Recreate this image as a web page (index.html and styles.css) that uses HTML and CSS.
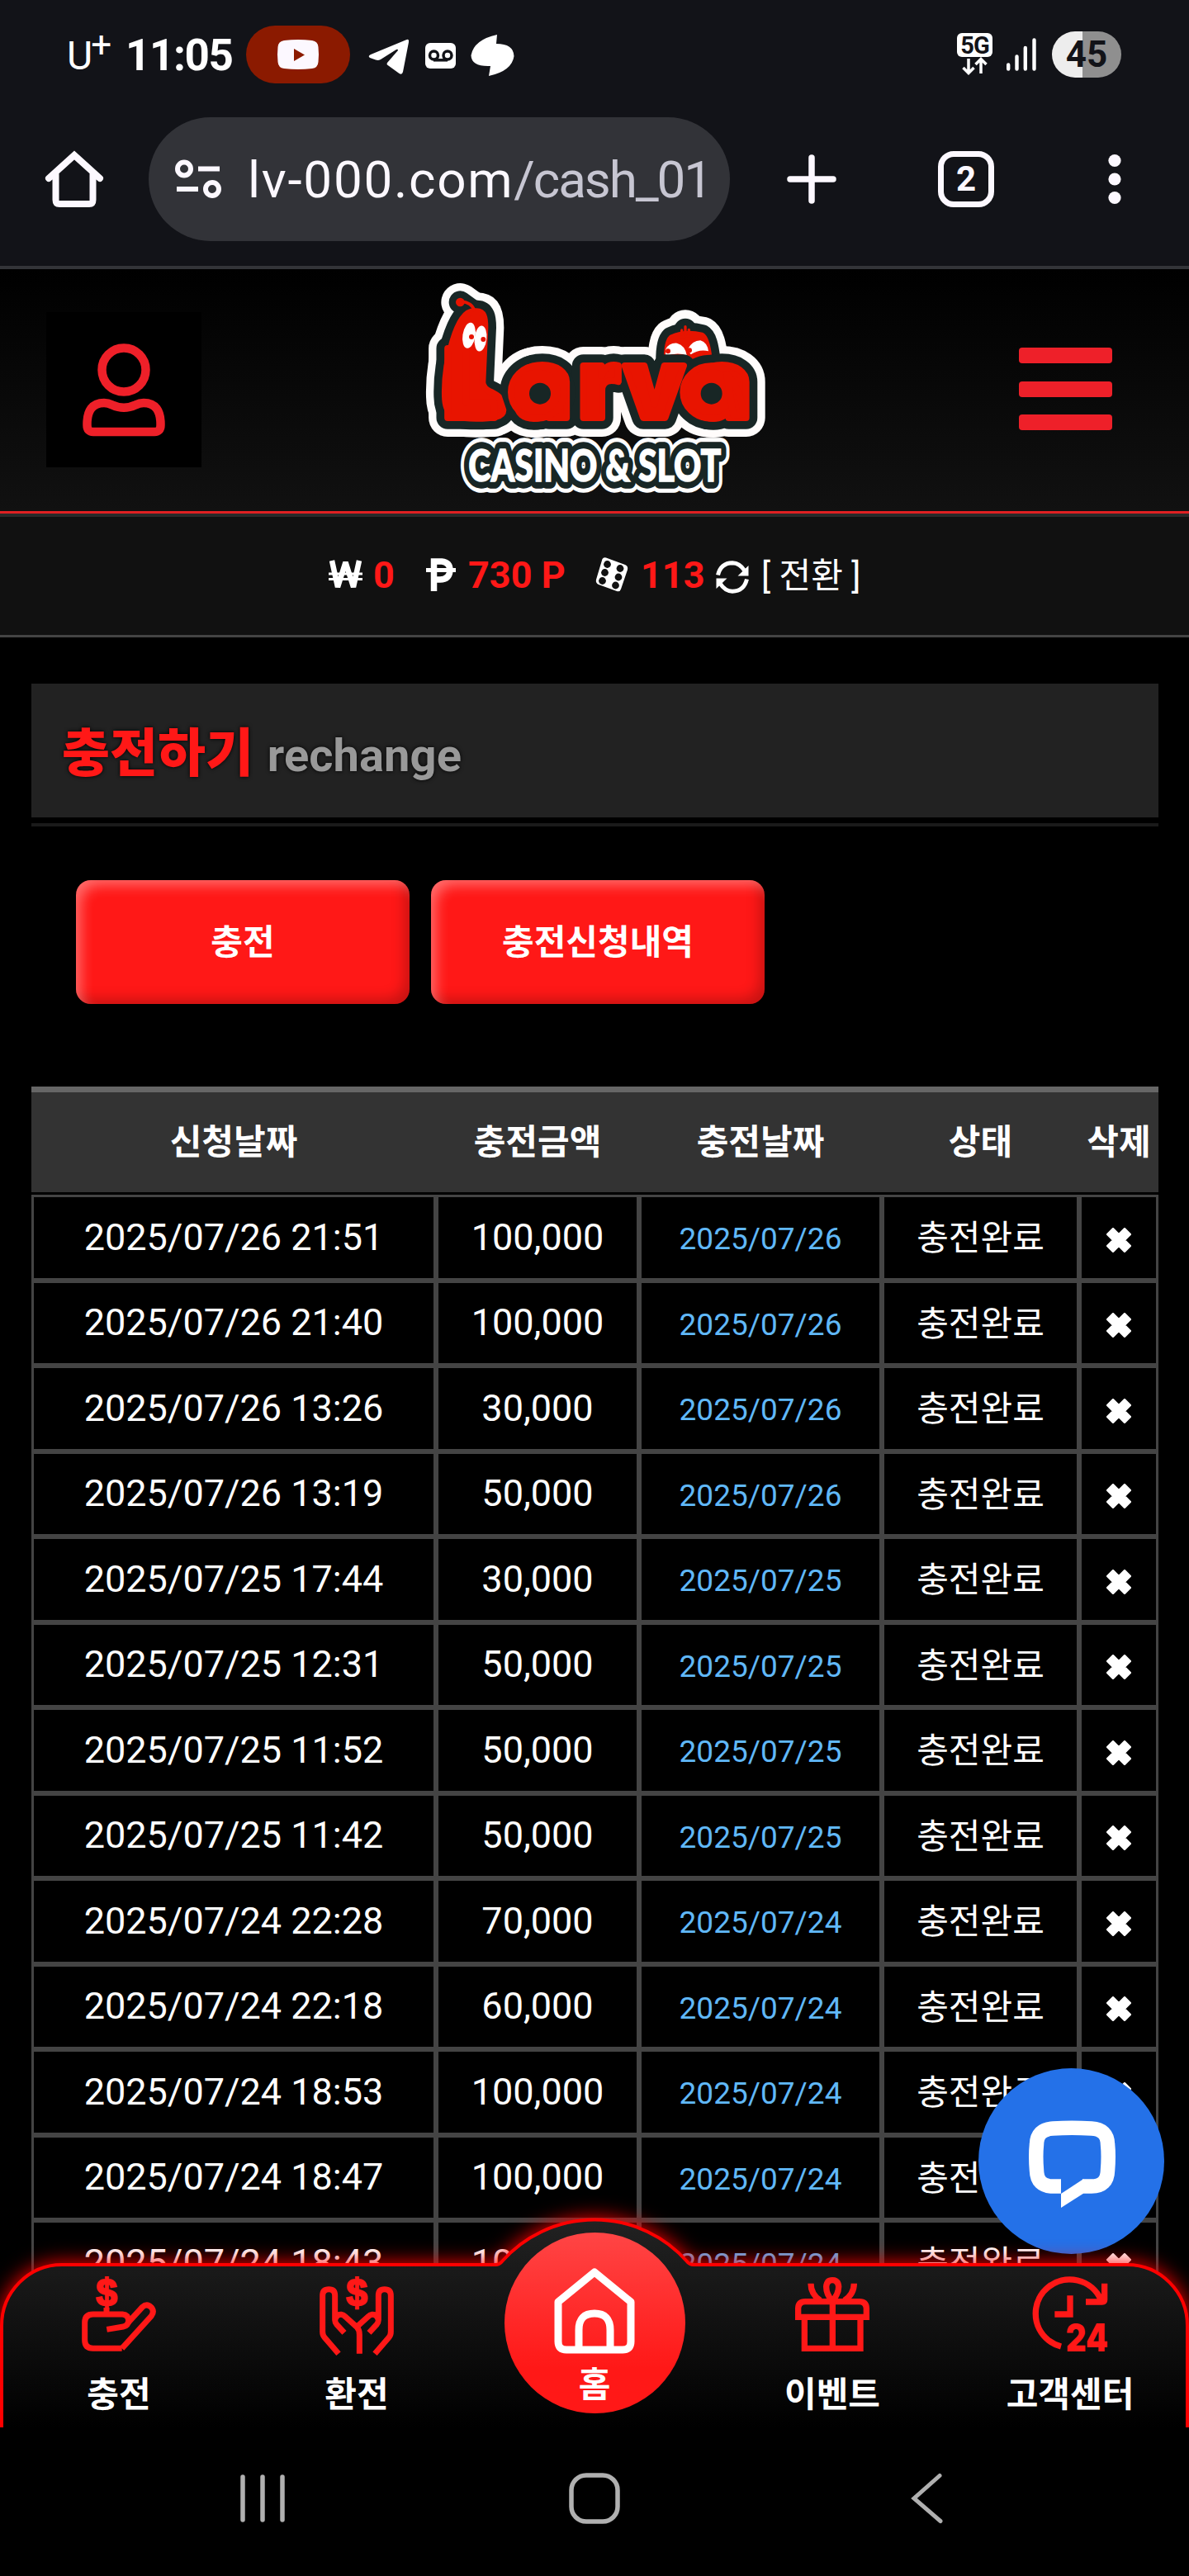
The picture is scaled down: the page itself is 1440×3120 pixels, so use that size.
FILE: index.html
```html
<!DOCTYPE html>
<html lang="ko">
<head>
<meta charset="utf-8">
<title>충전하기</title>
<link rel="stylesheet" href="styles.css">
</head>
<body>
<svg class="defs" aria-hidden="true">
  <symbol id="x" viewBox="0 0 30 30"><path d="M8 1.500L15 8.500L22 1.500L28.500 8L21.500 15L28.500 22L22 28.500L15 21.500L8 28.500L1.500 22L8.500 15L1.500 8Z" stroke="#fff" stroke-width="3" stroke-linejoin="round" fill="#fff"/></symbol>
</svg>
<div class="screen">
  <div class="status">
    <span class="carrier">U<sup>+</sup></span>
    <span class="clock">11:05</span>
    <span class="yt"><svg width="50" height="36" viewBox="0 0 50 36"><path d="M8 1Q25-1 42 1Q49 2 49.500 9Q50.500 18 49.500 27Q49 34 42 35Q25 37 8 35Q1 34 .5 27Q-.5 18 .5 9Q1 2 8 1Z" fill="#fcf8ff"/><path d="M20 11L33 18.500L20 26Z" fill="#8b1a00"/></svg></span>
    <svg class="tg" width="50" height="44" viewBox="0 0 50 44"><path d="M46.500 1Q49.500 0 49 4L42 40Q41 44 37.500 42L23 31.500Q22 30.500 23 29L36 14Q36 12 34 13L15 25Q12 26.500 9 25.500L2 23Q-1 21 3 19Z" fill="#fff"/></svg>
    <svg class="vm" width="38" height="32" viewBox="0 0 38 32"><rect width="37" height="31" rx="6" fill="#fff"/><g fill="none" stroke="#121318" stroke-width="3.500"><circle cx="10.500" cy="15" r="5"/><circle cx="27" cy="15" r="5"/><path d="M10 20.800H27"/></g></svg>
    <svg class="blob" width="54" height="50" viewBox="0 0 54 50"><path d="M32 0L31 11Q52 11 52.500 26Q50 44 22 50L24 38Q1 39 .5 25Q4 6 32 0Z" fill="#fff"/></svg>
    <div class="net"><b>5G</b><svg width="34" height="20" viewBox="0 0 34 20"><path d="M9 1V18M2.500 12L9 18.500L15.500 12M24 19V2M17.500 8L24 1.500L30.500 8" fill="none" stroke="#fff" stroke-width="3.500"/></svg></div>
    <svg class="sig" width="36" height="40" viewBox="0 0 36 40"><path d="M2.200 32.500V37.500M12.500 22.500V37.500M22.800 12V37.500M33.500 2.500V37.500" stroke="#fff" stroke-width="4.400" stroke-linecap="round"/></svg>
    <span class="batt">45</span>
  </div>
  <div class="bar">
    <svg width="68" height="68" viewBox="0 0 68 68"><path d="M3 33L34 5L65 33M11.500 28V59Q11.500 64 16 64H52Q56.500 64 56.500 59V28" fill="none" stroke="#fcf8ff" stroke-width="8" stroke-linecap="round"/></svg>
    <div class="url">
      <svg width="56" height="48" viewBox="0 0 56 48"><g fill="none" stroke="#fcf8ff" stroke-width="6"><circle cx="11" cy="11.500" r="8"/><circle cx="45" cy="36" r="8"/><path d="M28 11.500H54M2 36H28"/></g></svg>
      <span class="addr"><span class="dom">lv-000.com</span><span class="path">/cash_01</span></span>
    </div>
    <svg class="plus" width="60" height="60" viewBox="0 0 60 60"><path d="M30 4V56M4 30H56" stroke="#fcf8ff" stroke-width="7.500" stroke-linecap="round"/></svg>
    <span class="tabs">2</span>
    <svg class="dots" width="16" height="60" viewBox="0 0 16 60"><g fill="#fcf8ff"><circle cx="8" cy="7.500" r="7.600"/><circle cx="8" cy="30" r="7.600"/><circle cx="8" cy="52.500" r="7.600"/></g></svg>
  </div>

  <div class="page">
    <header class="head">
      <div class="user"><svg width="102" height="116" viewBox="0 0 102 116"><g fill="none" stroke="#ee2029" stroke-width="10.500"><circle cx="51" cy="34" r="26.500"/><path d="M6.500 101Q6 74 27 74Q32 74 37 76.500Q51 83 65 76.500Q70 74 75 74Q96 74 95.500 101Q95.500 109 88 109H14Q6.500 109 6.500 101Z"/></g></svg></div>
      <svg class="logo" width="480" height="292" viewBox="0 18 1440 876">
        <defs>
          <g id="worm">
            <path d="M292 172C250 165 225 215 205 280C185 345 175 410 177 480C178 545 200 560 290 560C350 560 388 555 388 530L372 482C350 462 315 460 313 430L322 230C322 195 318 172 292 172Z"/>
          </g>
          <path id="bug" d="M984 355Q982 285 1000 268Q1050 245 1110 260Q1128 270 1136 345L1136 380H984Z"/>
          <g id="name">
            <text class="name" y="559" x="170 430 662 828 1082">Larva</text>
            <ellipse cx="513" cy="465" rx="96" ry="95"/>
            <ellipse cx="1143" cy="465" rx="101" ry="95"/>
            <path d="M1200 400Q1250 450 1262 545L1225 548Z"/>
          </g>
          <text id="sub" class="sub" x="262" y="788" textLength="918" lengthAdjust="spacingAndGlyphs">CASINO &amp; SLOT</text>
        </defs>
        <g class="w1"><use href="#worm"/><use href="#bug"/><use href="#name"/><path d="M232 138L290 180M1050 235V260M600 440H1200"/></g>
        <g class="d1"><use href="#worm"/><use href="#bug"/><path d="M232 138L290 180M1050 238V260"/></g>
        <g class="r1"><use href="#bug"/></g>
        <g fill="none" stroke="#e81400" stroke-linecap="round" stroke-width="10"><path d="M1037 255V240M1050 255V227M1063 255V238"/></g>
        <g fill="#fff"><path d="M978 310Q990 285 1020 287Q1050 295 1056 333Q1025 318 978 334Z"/><path d="M1058 310Q1075 277 1105 277Q1130 285 1134 316Q1100 308 1070 328Z"/></g>
        <circle cx="987" cy="316" r="9" fill="#e81400"/><circle cx="1065" cy="313" r="9" fill="#e81400"/>
        <g class="d1"><use href="#name"/></g>
        <g class="r1"><use href="#worm"/><use href="#name"/></g>
        <circle cx="522" cy="470" r="39" fill="#182625"/><circle cx="1145" cy="470" r="39" fill="#182625"/>
        <circle cx="232" cy="138" r="16" fill="#e81400"/><path d="M235 136Q275 138 284 170" fill="none" stroke="#e81400" stroke-width="11"/>
        <g fill="#fff"><ellipse cx="264" cy="259" rx="23" ry="47" transform="rotate(9 264 259)"/><ellipse cx="306" cy="270" rx="22" ry="47" transform="rotate(6 306 270)"/></g>
        <circle cx="273" cy="264" r="9" fill="#e81400"/><circle cx="316" cy="273" r="9" fill="#e81400"/>
        <use href="#sub" class="w2"/><use href="#sub" class="d2"/><use href="#sub" class="f2"/>
      </svg>
      <div class="menu"><i></i><i></i><i></i></div>
    </header>
    <div class="info">
      <svg width="41" height="36" viewBox="0 0 41 36"><path d="M4 1L11 33L20.500 3L30 33L37 1" fill="none" stroke="#fff" stroke-width="6.500" stroke-linejoin="bevel"/><path d="M0 17H41M0 23.500H41" stroke="#fff" stroke-width="3"/></svg>
      <b>0</b>
      <svg width="36" height="40" viewBox="0 0 36 40"><path d="M9.500 40V4H19Q29 5 29 15Q28 26 17 26H9.500" fill="none" stroke="#fff" stroke-width="7.500"/><path d="M0 14.500H36" stroke="#fff" stroke-width="5"/></svg>
      <b>730 P</b>
      <svg width="42" height="42" viewBox="0 0 42 42"><path d="M8.500 2Q10-.5 13 .5L36 9Q40 10.500 39 15L31 38.500Q30 42 26 41L4 33Q0 31 1 27Z" fill="#fff"/><g fill="#111"><circle cx="14.500" cy="8.500" r="4.400"/><circle cx="30" cy="13.500" r="4.400"/><circle cx="11.500" cy="18.500" r="4.400"/><circle cx="28" cy="24" r="4.400"/><circle cx="8.500" cy="28.500" r="4.400"/><circle cx="24.500" cy="34" r="4.400"/></g></svg>
      <b>113</b>
      <svg class="sync" width="40" height="40" viewBox="0 0 40 40"><g fill="none" stroke="#fff" stroke-width="5"><path d="M2.500 17.500Q6 3 20 2.800Q29 3 35 12.500"/><path d="M37.500 22.500Q34 37 20 37.200Q11 37 5 27.500"/></g><path d="M39.500 6V18.500H26.500ZM.5 34V21.500H13.500Z" fill="#fff"/></svg>
      <span>[ 전환 ]</span>
    </div>

    <main>
      <h1><strong>충전하기</strong><small>rechange</small></h1>
      <div class="btns"><a>충전</a><a>충전신청내역</a></div>
      <table>
        <thead><tr><th>신청날짜</th><th>충전금액</th><th>충전날짜</th><th>상태</th><th>삭제</th></tr></thead>
        <tbody>
          <tr><td>2025/07/26 21:51</td><td>100,000</td><td class="d">2025/07/26</td><td class="k">충전완료</td><td><svg class="x"><use href="#x"/></svg></td></tr>
          <tr><td>2025/07/26 21:40</td><td>100,000</td><td class="d">2025/07/26</td><td class="k">충전완료</td><td><svg class="x"><use href="#x"/></svg></td></tr>
          <tr><td>2025/07/26 13:26</td><td>30,000</td><td class="d">2025/07/26</td><td class="k">충전완료</td><td><svg class="x"><use href="#x"/></svg></td></tr>
          <tr><td>2025/07/26 13:19</td><td>50,000</td><td class="d">2025/07/26</td><td class="k">충전완료</td><td><svg class="x"><use href="#x"/></svg></td></tr>
          <tr><td>2025/07/25 17:44</td><td>30,000</td><td class="d">2025/07/25</td><td class="k">충전완료</td><td><svg class="x"><use href="#x"/></svg></td></tr>
          <tr><td>2025/07/25 12:31</td><td>50,000</td><td class="d">2025/07/25</td><td class="k">충전완료</td><td><svg class="x"><use href="#x"/></svg></td></tr>
          <tr><td>2025/07/25 11:52</td><td>50,000</td><td class="d">2025/07/25</td><td class="k">충전완료</td><td><svg class="x"><use href="#x"/></svg></td></tr>
          <tr><td>2025/07/25 11:42</td><td>50,000</td><td class="d">2025/07/25</td><td class="k">충전완료</td><td><svg class="x"><use href="#x"/></svg></td></tr>
          <tr><td>2025/07/24 22:28</td><td>70,000</td><td class="d">2025/07/24</td><td class="k">충전완료</td><td><svg class="x"><use href="#x"/></svg></td></tr>
          <tr><td>2025/07/24 22:18</td><td>60,000</td><td class="d">2025/07/24</td><td class="k">충전완료</td><td><svg class="x"><use href="#x"/></svg></td></tr>
          <tr><td>2025/07/24 18:53</td><td>100,000</td><td class="d">2025/07/24</td><td class="k">충전완료</td><td><svg class="x"><use href="#x"/></svg></td></tr>
          <tr><td>2025/07/24 18:47</td><td>100,000</td><td class="d">2025/07/24</td><td class="k">충전완료</td><td><svg class="x"><use href="#x"/></svg></td></tr>
          <tr><td>2025/07/24 18:43</td><td>100,000</td><td class="d">2025/07/24</td><td class="k">충전완료</td><td><svg class="x"><use href="#x"/></svg></td></tr>
        </tbody>
      </table>
    </main>

    <div class="chat"><svg width="106" height="106" viewBox="0 0 106 106"><path d="M40 79H30Q11 79 10.500 60Q9 42 10.500 28Q11 10 30 9Q53 7.500 77 9Q96 10 96.500 28Q98 42 96.500 60Q96 79 77 79H66" fill="none" stroke="#fff" stroke-width="17.500"/><path d="M40 105V88L67 70.300V87.700Z" fill="#fff"/></svg></div>

    <nav class="tabsbar">
      <svg class="shape" width="1440" height="258" viewBox="0 0 1440 258">
        <defs><linearGradient id="g" gradientUnits="userSpaceOnUse" x1="0" y1="6" x2="0" y2="258"><stop offset="0" stop-color="#222"/><stop offset="1" stop-color="#000"/></linearGradient></defs>
        <path d="M2 300V135A73 74 0 0 1 75 61H600Q605 61 608 57A149.500 149.500 0 0 1 832 57Q835 61 840 61H1365A73 74 0 0 1 1438 135V300" fill="url(#g)" stroke="#f00" stroke-width="4"/>
      </svg>
      <div class="item"><svg width="90" height="90" viewBox="27 69 270 270"><g fill="none" stroke="#ff1817" stroke-width="21"><path d="M173 328H68Q38 328 38 298V234Q38 204 68 204H175Q197 206 197 228Q195 246 178 249L118 259"/><path d="M173 328L280 210Q292 194 280 179Q264 163 247 178L194 236"/><path d="M117 180V200"/></g><text x="117" y="173" class="cur">$</text></svg><span>충전</span></div>
      <div class="item"><svg width="90" height="90" viewBox="891 69 270 270"><g fill="none" stroke="#ff1817" stroke-width="21"><path d="M960 347L909 288Q902 280 902 268V136Q902 113 925 113Q947 113 947 136V225Q947 234 954 242L981 271"/><path d="M949 222Q952 204 970 205Q978 206 986 214L1026 250Q1036 260 1036 278V347"/><path d="M1092 347L1143 288Q1150 280 1150 268V136Q1150 113 1127 113Q1105 113 1105 136V225Q1105 234 1098 242L1071 271"/><path d="M1103 222Q1100 204 1082 205Q1074 206 1066 214L1026 250"/></g><text x="1026" y="173" class="cur">$</text></svg><span>환전</span></div>
      <div class="item home"><div class="ball"><svg width="108" height="106" viewBox="0 0 108 106"><path d="M10 42L54 6L98 42V90Q98 100 88 100H20Q10 100 10 90V42ZM35 100V76Q35 56 54 56Q73 56 73 76V100" fill="none" stroke="#fff" stroke-width="9" stroke-linejoin="round"/></svg><span>홈</span></div></div>
      <div class="item"><svg width="90" height="90" viewBox="39 69 270 270"><g fill="none" stroke="#ff1817" stroke-width="22"><path d="M50 214V184Q50 158 76 158H272Q298 158 298 184V214Z"/><path d="M73 214V328H276V214M175 158V328"/><path d="M174 156C158 138 152 120 152 104Q154 80 174 80Q195 80 197 104C197 120 190 138 174 156Z"/><path d="M96 92Q96 130 130 154M253 92Q253 130 218 154"/></g></svg><span>이벤트</span></div>
      <div class="item"><svg width="90" height="90" viewBox="903 69 270 270"><g fill="none" stroke="#ff1817" stroke-width="22"><path d="M1005 321Q980 314 960 299A124 124 0 1 1 1149 149M1163 92V151Q1163 159 1154 159H1095M1038 136V204H982"/></g><text x="1022" y="339" class="t24" textLength="154" lengthAdjust="spacingAndGlyphs">24</text></svg><span>고객센터</span></div>
    </nav>
  </div>

  <div class="sys">
    <svg width="54" height="62" viewBox="0 0 54 62"><path d="M3 5V57M27 5V57M51 5V57" stroke="#b0b0b0" stroke-width="5.500" stroke-linecap="round"/></svg>
    <svg width="62" height="62" viewBox="0 0 62 62"><rect x="3" y="3" width="56" height="56" rx="18" fill="none" stroke="#b0b0b0" stroke-width="5.500"/></svg>
    <svg width="40" height="62" viewBox="0 0 40 62"><path d="M35 3.500L4 31L36 58.500" fill="none" stroke="#b0b0b0" stroke-width="5" stroke-linecap="round"/></svg>
  </div>
</div>
</body>
</html>
```
FILE: styles.css
```css
* { box-sizing: border-box; }
body { margin: 0; background: #000; color: #fff; font-family: Roboto, "Noto Sans CJK KR", sans-serif; }
svg { display: block; flex: none; overflow: visible; }
.defs { position: absolute; width: 0; height: 0; }
.screen { width: 1440px; height: 3120px; overflow: hidden; display: flex; flex-direction: column; }

/* phone status bar */
.status { height: 132px; background: #121318; display: flex; align-items: center; padding-left: 81px; flex: none; }
.carrier { width: 71px; font-size: 48px; font-weight: 400; line-height: 56px; display: flex; padding-top: 4px; }
.carrier sup { font-size: 44px; line-height: 28px; margin-left: -2px; font-weight: 400; }
.clock { width: 146px; font-size: 53px; font-weight: 700; letter-spacing: -1.4px; line-height: 60px; padding-top: 2px; }
.yt { width: 126px; height: 70px; border-radius: 35px; background: #8b1a00; display: flex; align-items: center; justify-content: center; }
.tg { margin: 5px 0 0 22px; }
.vm { margin: 4px 0 0 19px; }
.blob { margin: 2px 0 0 17px; }
.net { margin-left: 535px; width: 43px; display: flex; flex-direction: column; align-items: center; padding-top: 24px; align-self: flex-start; margin-top: 16px; }
.net b { width: 43px; height: 29px; border-radius: 6px; background: #fff; color: #121318; font-size: 29px; line-height: 30px; text-align: center; letter-spacing: -1px; }
.net svg { margin: 1px 0 0 1px; }
.sig { margin-left: 17px; }
.batt { margin-left: 19px; width: 84px; height: 56px; border-radius: 28px; background: linear-gradient(90deg, #ededed 37px, #8f8f8f 37px); color: #121318; font-weight: 700; font-size: 44px; line-height: 57px; text-align: center; }

/* browser toolbar */
.bar { height: 194px; background: #121318; border-bottom: 4px solid #333438; display: flex; align-items: center; padding: 0 0 20px 56px; flex: none; }
.url { margin-left: 56px; width: 704px; height: 150px; border-radius: 75px; background: #323338; display: flex; align-items: center; padding-left: 32px; }
.addr { margin-left: 32px; font-size: 62px; line-height: 72px; white-space: nowrap; color: #fcf8ff; padding-top: 2px; }
.dom { letter-spacing: 1.7px; }
.path { color: #c7c6d2; letter-spacing: -2.1px; }
.plus { margin-left: 69px; }
.tabs { margin-left: 123px; width: 68px; height: 68px; border: 7.5px solid #fcf8ff; border-radius: 19px; font-size: 42px; font-weight: 700; line-height: 54px; text-align: center; color: #fcf8ff; }
.dots { margin-left: 138px; }

/* site */
.page { height: 2614px; position: relative; overflow: hidden; flex: none; }
.head { height: 296px; background: linear-gradient(#000, #111); border-bottom: 3px solid #e02022; display: flex; }
.user { margin: 52px 0 0 56px; width: 188px; height: 188px; background: #000; display: flex; padding: 36px 0 0 43px; }
.logo { margin-left: 236px; }
.menu { margin: 95px 0 0 274px; width: 113px; display: flex; flex-direction: column; gap: 21.500px; }
.menu i { height: 19px; border-radius: 4px; background: #ee2029; }
.name { font-family: Inter, sans-serif; font-weight: 900; font-size: 345px; }
.sub { font-family: Lato, sans-serif; font-weight: 900; font-size: 158px; }
.w1, .d1, .r1, .w2, .d2 { stroke-linejoin: round; stroke-linecap: round; }
.w1 { fill: #fffcfb; stroke: #fffcfb; stroke-width: 138px; }
.d1 { fill: #182625; stroke: #182625; stroke-width: 82px; }
.r1 { fill: #e81400; stroke: #e81400; stroke-width: 24px; }
.w2 { fill: #fff; stroke: #fff; stroke-width: 82px; }
.d2 { fill: #182625; stroke: #182625; stroke-width: 52px; }
.f2 { fill: #fff; stroke: #fff; stroke-width: 4px; }

.info { height: 150px; background: #111; border-top: 4px solid #2a2a2a; border-bottom: 3px solid #444; display: grid; grid-template-columns: 54px 64px 51px 154px 55px 91px 55px auto; align-items: center; padding: 0 0 3px 398px; font-size: 42px; }
.info b { font-size: 45px; font-weight: 700; color: #ff1817; line-height: 50px; white-space: nowrap; padding-top: 2px; }
.info span { white-space: nowrap; line-height: 50px; padding-top: 4px; }
.sync { margin-top: 5px; }

main { padding: 56px 37px 0 38px; }
h1 { margin: 0; height: 162px; background: #222; display: flex; align-items: baseline; padding: 40px 0 0 37px; position: relative; font-weight: 700; line-height: 90px; text-shadow: 0 0 5px #000; }
h1::after { content: ""; position: absolute; left: 0; right: 0; bottom: -11px; height: 4px; background: #1a1a1a; }
h1 strong { font-size: 63px; color: #ff1817; }
h1 small { font-size: 56px; font-weight: 700; color: #999; margin-left: 17px; letter-spacing: .1px; }
.btns { display: flex; gap: 26px; padding: 76px 0 0 54px; }
.btns a { width: 404px; height: 150px; border-radius: 18px; background: #ff1817; box-shadow: inset 10px 10px 16px -4px rgba(255,255,255,.36), inset -10px -10px 16px -4px rgba(0,0,0,.22); font-size: 42px; font-weight: 700; line-height: 151px; text-align: center; }

table { display: block; width: 1365px; margin-top: 100px; font-size: 45px; }
thead, tbody { display: block; }
thead { background: #333; border-top: 7px solid #666; height: 128px; margin-bottom: 3px; font-size: 42px; }
tr { display: grid; grid-template-columns: 490px 246px 294px 239px 96px; height: 103.5px; }
th { padding: 0; font-weight: 700; line-height: 121px; white-space: nowrap; text-align: center; }
td { padding: 0; border: 3px solid #444; display: flex; align-items: center; justify-content: center; white-space: nowrap; line-height: 50px; }
td.d { font-size: 37px; color: #60b8f8; padding-top: 5px; }
td.k { font-size: 42px; padding-top: 3px; }
.x { width: 30px; height: 30px; margin-top: 6px; }

.chat { position: absolute; left: 1185px; top: 2179px; width: 225px; height: 225px; border-radius: 50%; background: #2471e8; display: flex; justify-content: center; padding-top: 64px; }

.tabsbar { position: absolute; left: 0; bottom: 0; width: 1440px; height: 258px; display: grid; grid-template-columns: repeat(5, 288px); }
.shape { position: absolute; left: 0; top: 0; filter: drop-shadow(0 0 12px #f00); }
.item { position: relative; display: flex; flex-direction: column; align-items: center; padding-top: 76px; }
.item span { font-size: 42px; font-weight: 700; line-height: 60px; margin-top: 23px; }
.item.home { padding-top: 22px; }
.ball { width: 219px; height: 219px; border-radius: 50%; background: linear-gradient(#ff4545, #ff1817 75%); display: flex; flex-direction: column; align-items: center; padding-top: 42px; }
.ball span { margin-top: 7px; line-height: 60px; }
.cur { font: bold 136px "Liberation Sans", sans-serif; text-anchor: middle; fill: #ff1817; stroke: #ff1817; stroke-width: 7px; }
.t24 { font: 900 140px Inter, sans-serif; fill: #ff1817; }

.sys { height: 180px; flex: none; display: grid; grid-template-columns: 54px 62px 40px; column-gap: 344px; justify-content: start; padding: 55px 0 0 291px; }
.sys svg:nth-child(3) { margin-left: 8px; }
```
